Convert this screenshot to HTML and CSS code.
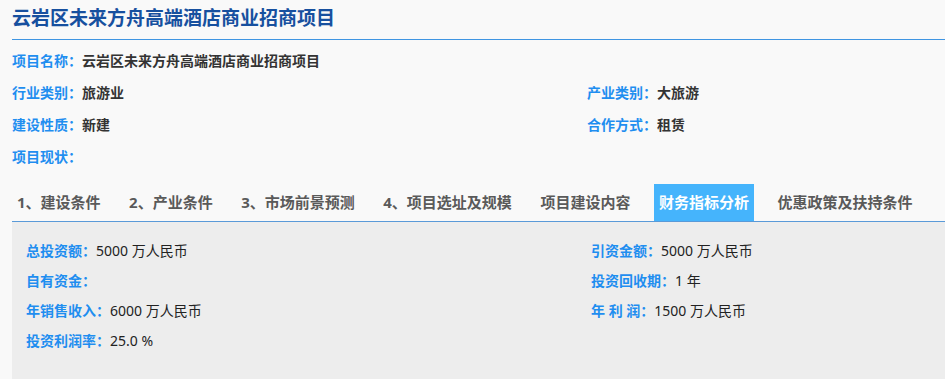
FILE: index.html
```html
<!DOCTYPE html>
<html lang="zh-CN">
<head>
  <meta charset="UTF-8">
  <title>云岩区未来方舟高端酒店商业招商项目</title>
  <link rel="stylesheet" href="styles.css">
</head>
<body>
  <div class="page">
    <h1 class="title">云岩区未来方舟高端酒店商业招商项目</h1>

    <div class="info">
      <div class="item wide"><span class="label">项目名称：</span><span class="value">云岩区未来方舟高端酒店商业招商项目</span></div>
      <div class="item"><span class="label">行业类别：</span><span class="value">旅游业</span></div>
      <div class="item"><span class="label">产业类别：</span><span class="value">大旅游</span></div>
      <div class="item"><span class="label">建设性质：</span><span class="value">新建</span></div>
      <div class="item"><span class="label">合作方式：</span><span class="value">租赁</span></div>
      <div class="item wide"><span class="label">项目现状：</span><span class="value"></span></div>
    </div>

    <ul class="tabs">
      <li>1、建设条件</li>
      <li>2、产业条件</li>
      <li>3、市场前景预测</li>
      <li>4、项目选址及规模</li>
      <li>项目建设内容</li>
      <li class="active">财务指标分析</li>
      <li>优惠政策及扶持条件</li>
    </ul>

    <div class="panel">
      <div class="item"><span class="label">总投资额：</span><span class="num">5000 万人民币</span></div>
      <div class="item"><span class="label">引资金额：</span><span class="num">5000 万人民币</span></div>
      <div class="item"><span class="label">自有资金：</span><span class="num"></span></div>
      <div class="item"><span class="label">投资回收期：</span><span class="num">1 年</span></div>
      <div class="item"><span class="label">年销售收入：</span><span class="num">6000 万人民币</span></div>
      <div class="item"><span class="label">年 利 润：</span><span class="num">1500 万人民币</span></div>
      <div class="item"><span class="label">投资利润率：</span><span class="num">25.0 %</span></div>
    </div>
  </div>
</body>
</html>
```

FILE: styles.css
```css
body {
  margin: 0;
  padding: 0;
  background: #f9f9f9;
  font-family: "Noto Sans", "Noto Sans CJK SC", sans-serif;
  font-size: 14px;
  color: #333;
}
.page {
  padding-left: 12px;
  height: 379px;
  display: flex;
  flex-direction: column;
}
.title {
  margin: 0;
  font-size: 19px;
  line-height: 37px;
  height: 39px;
  color: #17509f;
  font-weight: bold;
  border-bottom: 1px solid #3f95e2;
}
.info {
  margin-top: 5px;
  display: grid;
  grid-template-columns: 575px 1fr;
}
.info .item {
  line-height: 32px;
  white-space: nowrap;
}
.info .wide {
  grid-column: 1 / 3;
}
.label {
  color: #1f8ef0;
  font-weight: bold;
}
.value {
  color: #333;
  font-weight: bold;
}
.tabs {
  list-style: none;
  margin: 11px 0 0 0;
  padding: 0;
  display: flex;
  border-bottom: 1px solid #5a9ad8;
}
.tabs li {
  padding: 0 5px;
  margin-right: 18.5px;
  line-height: 37px;
  font-size: 15px;
  font-weight: bold;
  color: #5a5a5a;
  white-space: nowrap;
}
.tabs li.active {
  background: #45b4fc;
  color: #fff;
}
.panel {
  flex: 1;
  background: #ededed;
  padding: 14px 0 0 14px;
  display: grid;
  grid-template-columns: 565px 1fr;
  align-content: start;
}
.panel .item {
  line-height: 30px;
  white-space: nowrap;
}
.num {
  color: #222;
}
```
